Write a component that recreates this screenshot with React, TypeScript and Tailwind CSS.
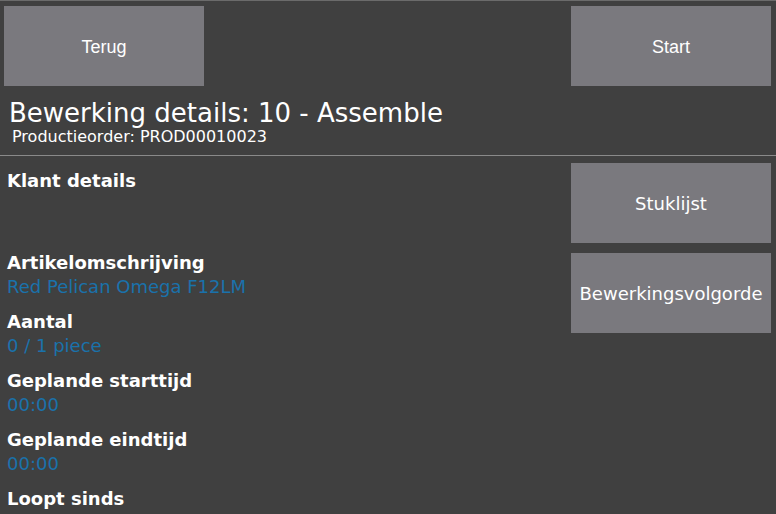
const fields = [
  { label: 'Artikelomschrijving', value: 'Red Pelican Omega F12LM' },
  { label: 'Aantal', value: '0 / 1 piece' },
  { label: 'Geplande starttijd', value: '00:00' },
  { label: 'Geplande eindtijd', value: '00:00' },
  { label: 'Loopt sinds', value: '' },
]

const App = () => {
  return (
    <div className="h-[514px] w-[776px] overflow-hidden border-t border-[#6b6b6b] bg-[#404040] font-['DejaVu_Sans',sans-serif] text-white">
      <div className="flex justify-between pl-[4px] pr-[5px] pt-[5px]">
        <button className="h-[80px] w-[200px] bg-[#7a797e] pt-[3px] font-['Liberation_Sans',sans-serif] text-[18px]">Terug</button>
        <button className="h-[80px] w-[200px] bg-[#7a797e] pt-[3px] font-['Liberation_Sans',sans-serif] text-[18px]">Start</button>
      </div>
      <div className="px-[9px] pt-[13px]">
        <h1 className="text-[26px] leading-[28px]">Bewerking details: 10 - Assemble</h1>
        <p className="pl-[3px] pt-[1px] text-[16px] leading-[18px]">Productieorder: PROD00010023</p>
      </div>
      <div className="mt-[9px] h-px bg-[#8a8a8a]" />
      <div className="flex justify-between pl-[7px] pr-[5px] pt-[7px]">
        <div className="flex flex-col pt-[6px]">
          <div className="h-[82px] text-[18px] font-bold leading-[24px]">Klant details</div>
          {fields.map((f) => (
            <div key={f.label} className="h-[59px]">
              <div className="text-[18px] font-bold leading-[24px]">{f.label}</div>
              <div className="text-[18px] leading-[24px] text-[#1a72ab]">{f.value}</div>
            </div>
          ))}
        </div>
        <div className="flex w-[200px] flex-col gap-[10px]">
          <button className="h-[80px] bg-[#7a797e] text-[18px]">Stuklijst</button>
          <button className="h-[80px] bg-[#7a797e] text-[18px]">Bewerkingsvolgorde</button>
        </div>
      </div>
    </div>
  )
}

export default App
